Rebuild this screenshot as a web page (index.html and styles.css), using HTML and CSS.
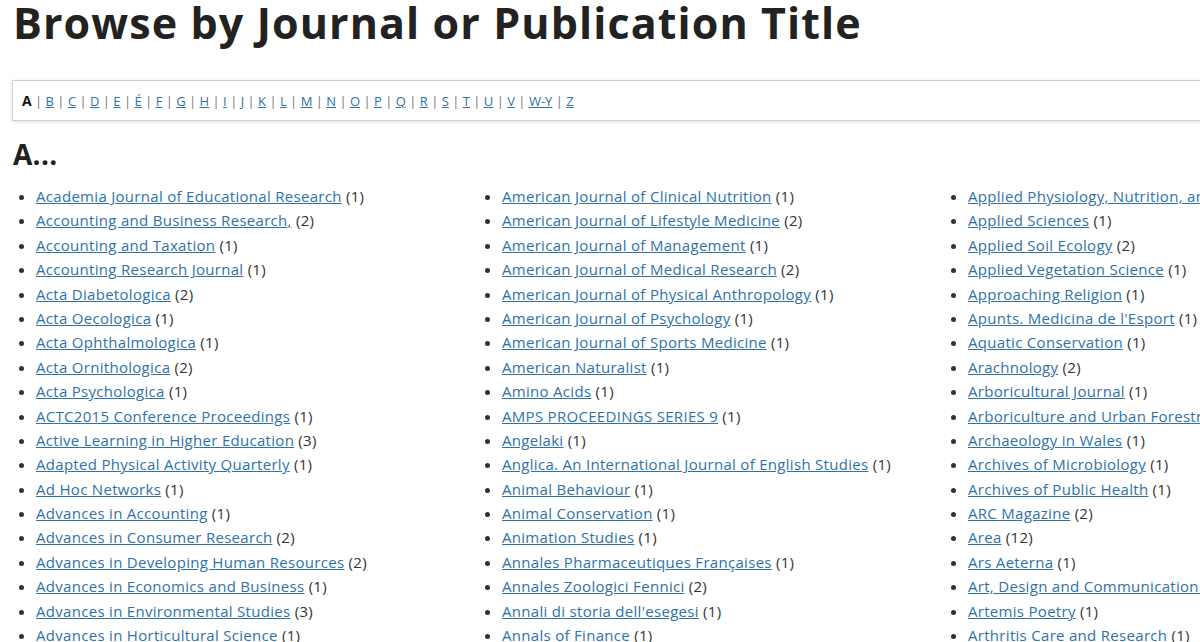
FILE: index.html
```html
<!DOCTYPE html>
<html lang="en">
<head>
    <meta charset="UTF-8">
    <meta name="viewport" content="width=device-width, initial-scale=1.0">
    <title>Browse by Journal or Publication Title</title>
    <link rel="stylesheet" href="styles.css">
</head>
<body>
    <div class="page">
        <h1 class="page-title">Browse by Journal or Publication Title</h1>

        <!-- Letter index -->
        <div class="letter-bar">
            <strong>A</strong> | <a href="#">B</a> | <a href="#">C</a> | <a href="#">D</a> | <a href="#">E</a> | <a href="#">É</a> | <a href="#">F</a> | <a href="#">G</a> | <a href="#">H</a> | <a href="#">I</a> | <a href="#">J</a> | <a href="#">K</a> | <a href="#">L</a> | <a href="#">M</a> | <a href="#">N</a> | <a href="#">O</a> | <a href="#">P</a> | <a href="#">Q</a> | <a href="#">R</a> | <a href="#">S</a> | <a href="#">T</a> | <a href="#">U</a> | <a href="#">V</a> | <a href="#">W-Y</a> | <a href="#">Z</a>
        </div>

        <h2 class="letter-heading">A...</h2>

        <ul class="journal-list">
            <li><a href="#">Academia Journal of Educational Research</a> (1)</li>
            <li><a href="#">Accounting and Business Research,</a> (2)</li>
            <li><a href="#">Accounting and Taxation</a> (1)</li>
            <li><a href="#">Accounting Research Journal</a> (1)</li>
            <li><a href="#">Acta Diabetologica</a> (2)</li>
            <li><a href="#">Acta Oecologica</a> (1)</li>
            <li><a href="#">Acta Ophthalmologica</a> (1)</li>
            <li><a href="#">Acta Ornithologica</a> (2)</li>
            <li><a href="#">Acta Psychologica</a> (1)</li>
            <li><a href="#">ACTC2015 Conference Proceedings</a> (1)</li>
            <li><a href="#">Active Learning in Higher Education</a> (3)</li>
            <li><a href="#">Adapted Physical Activity Quarterly</a> (1)</li>
            <li><a href="#">Ad Hoc Networks</a> (1)</li>
            <li><a href="#">Advances in Accounting</a> (1)</li>
            <li><a href="#">Advances in Consumer Research</a> (2)</li>
            <li><a href="#">Advances in Developing Human Resources</a> (2)</li>
            <li><a href="#">Advances in Economics and Business</a> (1)</li>
            <li><a href="#">Advances in Environmental Studies</a> (3)</li>
            <li><a href="#">Advances in Horticultural Science</a> (1)</li>

            <li><a href="#">American Journal of Clinical Nutrition</a> (1)</li>
            <li><a href="#">American Journal of Lifestyle Medicine</a> (2)</li>
            <li><a href="#">American Journal of Management</a> (1)</li>
            <li><a href="#">American Journal of Medical Research</a> (2)</li>
            <li><a href="#">American Journal of Physical Anthropology</a> (1)</li>
            <li><a href="#">American Journal of Psychology</a> (1)</li>
            <li><a href="#">American Journal of Sports Medicine</a> (1)</li>
            <li><a href="#">American Naturalist</a> (1)</li>
            <li><a href="#">Amino Acids</a> (1)</li>
            <li><a href="#">AMPS PROCEEDINGS SERIES 9</a> (1)</li>
            <li><a href="#">Angelaki</a> (1)</li>
            <li><a href="#">Anglica. An International Journal of English Studies</a> (1)</li>
            <li><a href="#">Animal Behaviour</a> (1)</li>
            <li><a href="#">Animal Conservation</a> (1)</li>
            <li><a href="#">Animation Studies</a> (1)</li>
            <li><a href="#">Annales Pharmaceutiques Françaises</a> (1)</li>
            <li><a href="#">Annales Zoologici Fennici</a> (2)</li>
            <li><a href="#">Annali di storia dell'esegesi</a> (1)</li>
            <li><a href="#">Annals of Finance</a> (1)</li>

            <li><a href="#">Applied Physiology, Nutrition, and Metabolism</a> (1)</li>
            <li><a href="#">Applied Sciences</a> (1)</li>
            <li><a href="#">Applied Soil Ecology</a> (2)</li>
            <li><a href="#">Applied Vegetation Science</a> (1)</li>
            <li><a href="#">Approaching Religion</a> (1)</li>
            <li><a href="#">Apunts. Medicina de l'Esport</a> (1)</li>
            <li><a href="#">Aquatic Conservation</a> (1)</li>
            <li><a href="#">Arachnology</a> (2)</li>
            <li><a href="#">Arboricultural Journal</a> (1)</li>
            <li><a href="#">Arboriculture and Urban Forestry</a> (1)</li>
            <li><a href="#">Archaeology in Wales</a> (1)</li>
            <li><a href="#">Archives of Microbiology</a> (1)</li>
            <li><a href="#">Archives of Public Health</a> (1)</li>
            <li><a href="#">ARC Magazine</a> (2)</li>
            <li><a href="#">Area</a> (12)</li>
            <li><a href="#">Ars Aeterna</a> (1)</li>
            <li><a href="#">Art, Design and Communication in Higher Education</a> (1)</li>
            <li><a href="#">Artemis Poetry</a> (1)</li>
            <li><a href="#">Arthritis Care and Research</a> (1)</li>
        </ul>
    </div>
</body>
</html>
```

FILE: styles.css
```css
html {
    overflow: hidden;
}
body {
    font-family: "Open Sans", Arial, sans-serif;
    margin: 0;
    padding: 0;
    background-color: #fff;
    color: #333;
}
.page {
    width: 1440px;
    padding: 0 12px;
}
.page-title {
    margin: 0;
    font-size: 43px;
    line-height: 45px;
    font-weight: 700;
    letter-spacing: 1.1px;
    color: #222;
    padding-left: 1px;
}
.letter-bar {
    margin-top: 35px;
    padding: 10px 9px 9px;
    border: 1px solid #cfcfcf;
    box-shadow: 0 1px 4px rgba(0, 0, 0, 0.12);
    font-size: 13px;
    line-height: 20px;
    color: #777;
}
.letter-bar strong {
    color: #111;
    font-size: 14px;
}
.letter-bar a {
    color: #2f72a8;
}
.letter-heading {
    margin: 16px 0 0;
    font-size: 28px;
    line-height: 34px;
    font-weight: 700;
    letter-spacing: 0.3px;
    color: #222;
    padding-left: 1px;
}
.journal-list {
    margin: 13px 0 0;
    padding-left: 24px;
    display: grid;
    grid-template-columns: repeat(3, 466px);
    grid-template-rows: repeat(19, 24.4px);
    grid-auto-flow: column;
    font-size: 15px;
    line-height: 24.4px;
    letter-spacing: 0.3px;
}
.journal-list li {
    white-space: nowrap;
}
.journal-list a {
    color: #2f72a8;
}
```
